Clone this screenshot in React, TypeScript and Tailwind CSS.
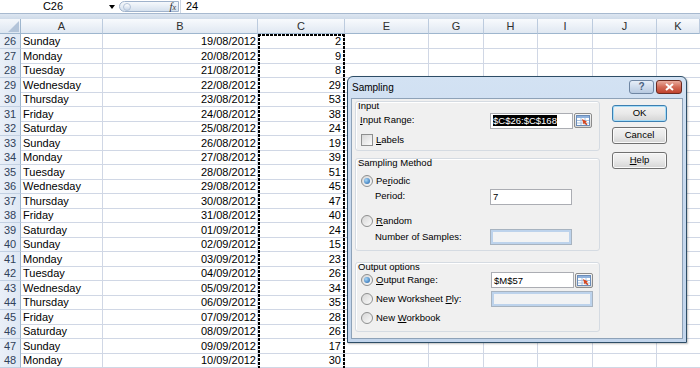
import React from 'react';

const rows: [number, string, string, number][] = [
  [26, 'Sunday', '19/08/2012', 2],
  [27, 'Monday', '20/08/2012', 9],
  [28, 'Tuesday', '21/08/2012', 8],
  [29, 'Wednesday', '22/08/2012', 29],
  [30, 'Thursday', '23/08/2012', 53],
  [31, 'Friday', '24/08/2012', 38],
  [32, 'Saturday', '25/08/2012', 24],
  [33, 'Sunday', '26/08/2012', 19],
  [34, 'Monday', '27/08/2012', 39],
  [35, 'Tuesday', '28/08/2012', 51],
  [36, 'Wednesday', '29/08/2012', 45],
  [37, 'Thursday', '30/08/2012', 47],
  [38, 'Friday', '31/08/2012', 40],
  [39, 'Saturday', '01/09/2012', 24],
  [40, 'Sunday', '02/09/2012', 15],
  [41, 'Monday', '03/09/2012', 23],
  [42, 'Tuesday', '04/09/2012', 26],
  [43, 'Wednesday', '05/09/2012', 34],
  [44, 'Thursday', '06/09/2012', 35],
  [45, 'Friday', '07/09/2012', 28],
  [46, 'Saturday', '08/09/2012', 26],
  [47, 'Sunday', '09/09/2012', 17],
  [48, 'Monday', '10/09/2012', 30],
];

const gridCols = 'grid grid-cols-[21px_82px_155px_87px_84px_55px_54px_55px_64px_1fr]';
const headers = ['A', 'B', 'C', 'E', 'G', 'H', 'I', 'J', 'K'];

function Radio({ on }: { on?: boolean }) {
  return (
    <span className="w-[12px] h-[12px] rounded-full border border-[#8e8f8f] bg-linear-to-br from-[#d6d6d6] to-[#fbfbfb] flex items-center justify-center shrink-0">
      {on && <span className="w-[6px] h-[6px] rounded-full bg-[radial-gradient(circle_at_35%_35%,#a8d8f8,#1b5ea8)]" />}
    </span>
  );
}

function RefBtn() {
  return (
    <span className="w-[18px] h-[15px] border border-[#8c8c8c] rounded-[2px] bg-linear-to-b from-[#f7f7f7] to-[#d8d8d8] flex items-center justify-center shrink-0">
      <svg width="14" height="11" viewBox="0 0 14 11">
        <rect x="0.5" y="0.5" width="13" height="10" fill="#fff" stroke="#6b8cb8" />
        <rect x="1" y="1" width="12" height="2" fill="#8fb1dc" />
        <path d="M1 5.5H13M1 8H13M5 3V10M9 3V10" stroke="#aac2df" strokeWidth="1" />
        <path d="M6 4 L11 6.5 L9.5 7.2 L11.5 9.2 L10.3 10.2 L8.4 8.2 L7.6 9.6 Z" fill="#d6461f" />
      </svg>
    </span>
  );
}

function TextBox({ children, w = 'w-[83px]' }: { children?: React.ReactNode; w?: string }) {
  return (
    <div className={`${w} h-[16px] border border-[#abadb3] bg-white flex items-center pl-[2px] shrink-0 overflow-hidden`}>
      {children}
    </div>
  );
}

function DisabledBox({ w = 'w-[82px]' }: { w?: string }) {
  return <div className={`${w} h-[16px] border border-[#a7b3c0] bg-[#f2f3f4] shadow-[inset_0_0_0_2px_#bdd3ec] shrink-0`} />;
}

function Button({ children, def }: { children: React.ReactNode; def?: boolean }) {
  return (
    <div
      className={`w-[55px] h-[17px] rounded-[3px] border flex items-center justify-center bg-linear-to-b from-[#f3f3f3] via-[#e9e9e9] to-[#d5d5d5] ${
        def ? 'border-[#3c7fb1] shadow-[inset_0_0_0_1px_#a6dcf7]' : 'border-[#707070] shadow-[inset_0_0_0_1px_#fafafa]'
      }`}
    >
      {children}
    </div>
  );
}

function Group({ h, legend, children }: { h: string; legend: string; children: React.ReactNode }) {
  return (
    <div className={`${h} border border-[#d5dbe2] rounded-[3px] shadow-[inset_1px_1px_0_#ffffff] flex flex-col`}>
      <div className="h-[9px] leading-[9px] mt-[-1px] pl-[2px]">{legend}</div>
      {children}
    </div>
  );
}

export default function App() {
  return (
    <div className="w-[700px] h-[368px] overflow-hidden bg-white relative font-['Liberation_Sans',Arial,sans-serif] text-[11px] text-black">
      {/* formula bar */}
      <div className="h-[14px] flex items-center border-b border-[#a7b9cf] bg-white">
        <div className="w-[106px] text-center leading-[13px]">C26</div>
        <div className="w-[12px] flex justify-center">
          <span className="w-0 h-0 border-x-[3px] border-x-transparent border-t-[4px] border-t-black" />
        </div>
        <div className="ml-[1px] h-[11px] w-[60px] rounded-l-full rounded-r-[2px] border border-[#9fb2cb] bg-linear-to-b from-[#f6f9fc] to-[#d6e1ee] flex items-center">
          <span className="ml-[3px] w-[8px] h-[8px] rounded-full border border-[#b3c3d8] bg-linear-to-b from-white to-[#c8d6e8]" />
          <span className="ml-auto mr-[2px] font-['Liberation_Serif',serif] italic text-[11px] leading-[10px] text-[#333]">
            f<span className="text-[8px]">x</span>
          </span>
        </div>
        <div className="w-px h-[13px] bg-[#cdd7e4] ml-[1px]" />
        <div className="ml-[5px] leading-[13px]">24</div>
      </div>
      <div className="h-[5px] bg-linear-to-b from-[#dde6f1] to-[#cfdbe9]" />

      {/* column headers */}
      <div className={`${gridCols} h-[15px]`}>
        <div className="border-r border-b border-[#9eb6ce] bg-linear-to-b from-[#f4f7fb] to-[#dde6f1] relative">
          <svg className="absolute right-[1px] bottom-[1px]" width="11" height="11" viewBox="0 0 11 11">
            <path d="M11 0V11H0Z" fill="#b3c4d9" />
          </svg>
        </div>
        {headers.map((h) => (
          <div
            key={h}
            className="border-r border-b border-r-[#bccbde] border-b-[#9eb6ce] bg-linear-to-b from-[#f8fafd] to-[#e0e8f2] text-center leading-[14px] text-[#2e2e2e]"
          >
            {h}
          </div>
        ))}
      </div>

      {/* rows */}
      <div className="relative">
        {rows.map(([n, d, dt, v]) => (
          <div key={n} className={`${gridCols} h-[14.5px]`}>
            <div className="bg-linear-to-r from-[#eaf0f8] to-[#dfe8f4] border-r border-r-[#9eb6ce] border-b border-b-[#c2d0e2] text-center leading-[14px] text-[#30425a]">
              {n}
            </div>
            <div className="border-r border-b border-[#d0d7e5] pl-[2px] leading-[14px] whitespace-nowrap">{d}</div>
            <div className="border-r border-b border-[#d0d7e5] pr-[1px] text-right leading-[14px]">{dt}</div>
            <div className="border-r border-b border-[#d0d7e5] pr-[3px] text-right leading-[14px]">{v}</div>
            <div className="border-r border-b border-[#d0d7e5]" />
            <div className="border-r border-b border-[#d0d7e5]" />
            <div className="border-r border-b border-[#d0d7e5]" />
            <div className="border-r border-b border-[#d0d7e5]" />
            <div className="border-r border-b border-[#d0d7e5]" />
            <div className="border-b border-[#d0d7e5]" />
          </div>
        ))}
        {/* marching ants */}
        <div className="absolute left-[258px] top-0 w-[87px] bottom-0 pointer-events-none">
          <div className="absolute left-0 top-0 bottom-0 w-[2px] bg-[repeating-linear-gradient(to_bottom,#000_0px,#000_3px,transparent_3px,transparent_4px)]" />
          <div className="absolute right-0 top-0 bottom-0 w-[2px] bg-[repeating-linear-gradient(to_bottom,#000_0px,#000_3px,transparent_3px,transparent_4px)]" />
          <div className="absolute left-0 right-0 top-0 h-[2px] bg-[repeating-linear-gradient(to_right,#000_0px,#000_3px,transparent_3px,transparent_4px)]" />
        </div>
      </div>

      {/* dialog */}
      <div className="absolute left-[347px] top-[76px] w-[340px] h-[267px] border border-[#2d4d66] rounded-t-[6px] bg-linear-to-b from-[#d3e2f3] via-[#c6d8ee] to-[#c2d5ec] flex flex-col text-[9.5px] shadow-[1px_1px_2px_rgba(0,0,0,0.25)]">
        <div className="h-[21px] flex items-start shrink-0">
          <div className="pl-[4px] pt-[5px] text-[10px] leading-[12px] text-black">Sampling</div>
          <div className="ml-auto mt-[3px] mr-[4px] flex gap-[2px]">
            <div className="w-[25px] h-[14px] rounded-[3px] border border-[#6f86a3] bg-linear-to-b from-[#e6eef8] to-[#b7c9e0] flex items-center justify-center text-[10px] leading-[10px] text-[#48617f] font-bold">
              ?
            </div>
            <div className="w-[26px] h-[14px] rounded-[3px] border border-[#6b2a20] bg-linear-to-b from-[#e9ab9c] via-[#d26a56] to-[#c0412c] flex items-center justify-center">
              <svg width="9" height="8" viewBox="0 0 9 8">
                <path d="M1 1L8 7M8 1L1 7" stroke="#fff" strokeWidth="2" />
              </svg>
            </div>
          </div>
        </div>
        <div className="flex-1 mx-[3px] mb-[3px] border border-[#8ea2b8] bg-[#f0f0f0] flex pl-[3px] pt-[2px]">
          {/* left column */}
          <div className="w-[245px] flex flex-col">
            <Group h="h-[50px]" legend="Input">
              <div className="mt-[2px] h-[17px] flex items-center pl-[4px]">
                <div className="w-[130px]">
                  <span className="underline">I</span>nput Range:
                </div>
                <TextBox>
                  <span className="bg-black text-white leading-[11px]">$C$26:$C$168</span>
                </TextBox>
                <div className="ml-[1px]">
                  <RefBtn />
                </div>
              </div>
              <div className="mt-[5px] h-[12px] flex items-center pl-[5px]">
                <span className="w-[12px] h-[12px] border border-[#8e8f8f] bg-linear-to-br from-[#d8d8d8] to-[#fbfbfb] shrink-0" />
                <span className="ml-[3px]">
                  <span className="underline">L</span>abels
                </span>
              </div>
            </Group>

            <div className="mt-[7px]">
              <Group h="h-[93px]" legend="Sampling Method">
                <div className="mt-[8px] h-[12px] flex items-center pl-[5px]">
                  <Radio on />
                  <span className="ml-[3px]">
                    Pe<span className="underline">r</span>iodic
                  </span>
                </div>
                <div className="mt-[1px] h-[17px] flex items-center pl-[19px]">
                  <div className="w-[115px]">Period:</div>
                  <TextBox w="w-[82px]">
                    <span className="leading-[11px]">7</span>
                  </TextBox>
                </div>
                <div className="mt-[10px] h-[12px] flex items-center pl-[5px]">
                  <Radio />
                  <span className="ml-[3px]">
                    <span className="underline">R</span>andom
                  </span>
                </div>
                <div className="mt-[2px] h-[16px] flex items-center pl-[19px]">
                  <div className="w-[115px]">Number of Samples:</div>
                  <DisabledBox />
                </div>
              </Group>
            </div>

            <div className="mt-[11px]">
              <Group h="h-[70px]" legend="Output options">
                <div className="mt-[1px] h-[16px] flex items-center pl-[5px]">
                  <Radio on />
                  <span className="ml-[3px] w-[115px]">
                    <span className="underline">O</span>utput Range:
                  </span>
                  <TextBox>
                    <span className="leading-[11px]">$M$57</span>
                  </TextBox>
                  <div className="ml-[1px]">
                    <RefBtn />
                  </div>
                </div>
                <div className="mt-[3px] h-[16px] flex items-center pl-[5px]">
                  <Radio />
                  <span className="ml-[3px] w-[115px]">
                    New Worksheet <span className="underline">P</span>ly:
                  </span>
                  <DisabledBox w="w-[102px]" />
                </div>
                <div className="mt-[5px] h-[12px] flex items-center pl-[5px]">
                  <Radio />
                  <span className="ml-[3px]">
                    New <span className="underline">W</span>orkbook
                  </span>
                </div>
              </Group>
            </div>
          </div>

          {/* right column */}
          <div className="ml-[12px] flex flex-col pt-[4px]">
            <Button def>OK</Button>
            <div className="mt-[5px]">
              <Button>Cancel</Button>
            </div>
            <div className="mt-[8px]">
              <Button>
                <span>
                  <span className="underline">H</span>elp
                </span>
              </Button>
            </div>
          </div>
        </div>
      </div>
    </div>
  );
}
